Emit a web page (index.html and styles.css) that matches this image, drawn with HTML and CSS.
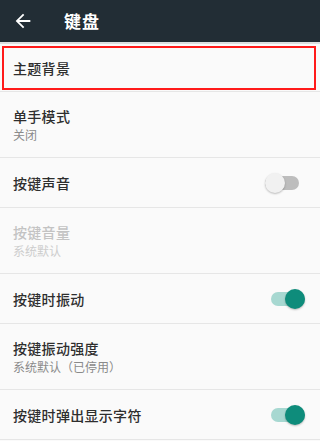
FILE: index.html
```html
<!DOCTYPE html>
<html lang="zh">
<head>
<meta charset="utf-8">
<link rel="stylesheet" href="styles.css">
</head>
<body>
<div class="screen">
  <header class="appbar">
    <svg class="back" viewBox="0 0 24 24" width="22" height="22"><path d="M20 11H7.83l5.59-5.59L12 4l-8 8 8 8 1.41-1.41L7.83 13H20v-2z" fill="#ffffff"/></svg>
    <div class="title">键盘</div>
  </header>
  <div class="shadow"></div>
  <div class="list">
    <div class="row single highlighted">
      <div class="texts"><div class="label">主题背景</div></div>
    </div>
    <div class="row double">
      <div class="texts"><div class="label">单手模式</div><div class="sub">关闭</div></div>
    </div>
    <div class="row single">
      <div class="texts"><div class="label">按键声音</div></div>
      <div class="switch off"><div class="track"></div><div class="thumb"></div></div>
    </div>
    <div class="row double disabled">
      <div class="texts"><div class="label">按键音量</div><div class="sub">系统默认</div></div>
    </div>
    <div class="row single">
      <div class="texts"><div class="label">按键时振动</div></div>
      <div class="switch on"><div class="track"></div><div class="thumb"></div></div>
    </div>
    <div class="row double">
      <div class="texts"><div class="label">按键振动强度</div><div class="sub">系统默认（已停用）</div></div>
    </div>
    <div class="row single">
      <div class="texts"><div class="label">按键时弹出显示字符</div></div>
      <div class="switch on"><div class="track"></div><div class="thumb"></div></div>
    </div>
  </div>
</div>
</body>
</html>
```
FILE: styles.css
```css
html, body {
  margin: 0;
  padding: 0;
  background: #fafafa;
}
body {
  font-family: "Noto Sans CJK SC", "Noto Sans", sans-serif;
  width: 320px;
  height: 441px;
  overflow: hidden;
}
.screen {
  width: 320px;
  height: 441px;
  display: flex;
  flex-direction: column;
  background: #fafafa;
}
.appbar {
  height: 42px;
  background: #222d35;
  display: flex;
  align-items: center;
  flex-shrink: 0;
}
.back {
  margin-left: 12px;
  display: block;
}
.title {
  margin-left: 30px;
  color: #ffffff;
  font-size: 17px;
  font-weight: 700;
  letter-spacing: 1px;
  line-height: 20px;
}
.shadow {
  height: 2px;
  background: #dcdfe0;
  flex-shrink: 0;
}
.list {
  display: flex;
  flex-direction: column;
}
.row {
  display: flex;
  align-items: center;
  padding: 0 16px 0 13px;
  border-bottom: 1.5px solid #e6e6e6;
  box-sizing: border-box;
}
.row.single {
  height: 50px;
}
.row.double {
  height: 66px;
}
.list .row:first-child {
  height: 48px;
}
.highlighted {
  position: relative;
}
.highlighted::after {
  content: "";
  position: absolute;
  left: 2px;
  top: 2px;
  right: 4px;
  bottom: 1px;
  border: 2px solid #ff1a1a;
}
.texts {
  flex: 1;
  display: flex;
  flex-direction: column;
}
.label {
  font-size: 14px;
  font-weight: 500;
  color: #2e2e2e;
  letter-spacing: 0.3px;
  line-height: 18px;
}
.sub {
  font-size: 12px;
  color: #8a8a8a;
  line-height: 16px;
  margin-top: 2px;
}
.disabled .label {
  color: #c3c3c3;
}
.disabled .sub {
  color: #cdcdcd;
}
.switch {
  position: relative;
  width: 34px;
  height: 20px;
  flex-shrink: 0;
}
.track {
  position: absolute;
  left: 0;
  right: 0;
  top: 3px;
  height: 14px;
  border-radius: 7px;
}
.thumb {
  position: absolute;
  top: 0;
  width: 20px;
  height: 20px;
  border-radius: 50%;
  box-shadow: 0 1px 2px rgba(0,0,0,0.25);
}
.switch.off .track {
  background: #bdbdbd;
}
.switch.off .thumb {
  left: 0;
  background: #f1f1f1;
}
.switch.on .track {
  background: #a7d8d1;
}
.switch.on .thumb {
  right: 0;
  background: #0e8c7b;
}
.switch.on {
  margin-right: -1px;
}
.switch.off {
  margin-right: 5px;
}
```
